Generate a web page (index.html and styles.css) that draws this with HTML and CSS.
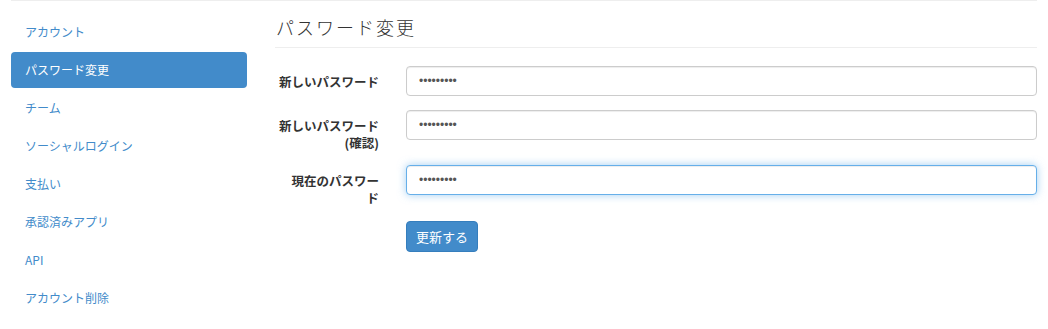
FILE: index.html
```html
<!DOCTYPE html>
<html lang="ja">
<head>
    <meta charset="UTF-8">
    <meta name="viewport" content="width=device-width, initial-scale=1.0">
    <title>パスワード変更</title>
    <link rel="stylesheet" href="styles.css">
</head>
<body>
    <div class="settings">
        <ul class="side-nav">
            <li><a href="#">アカウント</a></li>
            <li class="active"><a href="#">パスワード変更</a></li>
            <li><a href="#">チーム</a></li>
            <li><a href="#">ソーシャルログイン</a></li>
            <li><a href="#">支払い</a></li>
            <li><a href="#">承認済みアプリ</a></li>
            <li><a href="#">API</a></li>
            <li><a href="#">アカウント削除</a></li>
        </ul>

        <div class="content">
            <h1 class="page-title">パスワード変更</h1>

            <form class="form-horizontal">
                <div class="form-row">
                    <label for="new-password">新しいパスワード</label>
                    <input type="password" id="new-password" value="secretpw1">
                </div>
                <div class="form-row">
                    <label for="new-password2">新しいパスワード(確認)</label>
                    <input type="password" id="new-password2" value="secretpw1">
                </div>
                <div class="form-row">
                    <label for="current-password">現在のパスワー<br>ド</label>
                    <input type="password" id="current-password" class="focused" value="secretpw1">
                </div>
                <div class="form-actions">
                    <button type="submit" class="btn-primary">更新する</button>
                </div>
            </form>
        </div>
    </div>
</body>
</html>
```

FILE: styles.css
```css
body {
    font-family: "Noto Sans CJK JP", "Liberation Sans", sans-serif;
    font-size: 13px;
    color: #333;
    background-color: #ffffff;
    margin: 0;
    padding: 0 11px;
}

.settings {
    display: flex;
    gap: 28px;
    border-top: 1px solid #eeeeee;
}

/* Menu lateral */
.side-nav {
    list-style: none;
    width: 236px;
    margin: 0;
    padding: 13px 0 0 0;
    display: flex;
    flex-direction: column;
    gap: 2px;
}

.side-nav li a {
    display: block;
    height: 36px;
    line-height: 36px;
    padding: 0 14px;
    font-size: 12px;
    color: #428bca;
    text-decoration: none;
    border-radius: 4px;
}

.side-nav li.active a {
    background-color: #428bca;
    color: #ffffff;
}

.content {
    flex: 1;
}

.page-title {
    font-size: 18px;
    font-weight: 300;
    letter-spacing: 2px;
    line-height: 24px;
    color: #333;
    margin: 0 0 18px 0;
    padding: 14px 0 8px 1px;
    border-bottom: 1px solid #eeeeee;
}

/* Formulario */
.form-row {
    display: flex;
    align-items: flex-start;
    margin-bottom: 14px;
}

.form-row label {
    width: 104px;
    margin-right: 27px;
    padding-top: 7px;
    line-height: 17px;
    font-size: 12.5px;
    font-weight: bold;
    text-align: right;
    color: #333;
}

.form-row input {
    flex: 1;
    height: 30px;
    box-sizing: border-box;
    padding: 0 12px;
    border: 1px solid #cccccc;
    border-radius: 4px;
    font-size: 12px;
    color: #555;
    outline: none;
    box-shadow: inset 0 1px 1px rgba(0, 0, 0, 0.075);
}

.form-row input.focused {
    border-color: #66afe9;
    box-shadow: inset 0 1px 1px rgba(0, 0, 0, 0.075), 0 0 8px rgba(102, 175, 233, 0.6);
}

.form-actions {
    padding-left: 131px;
    padding-top: 1px;
}

.btn-primary {
    height: 31px;
    padding: 0 9px;
    font-family: inherit;
    font-size: 13px;
    color: #ffffff;
    background-color: #428bca;
    border: 1px solid #357ebd;
    border-radius: 4px;
    cursor: pointer;
}
```
